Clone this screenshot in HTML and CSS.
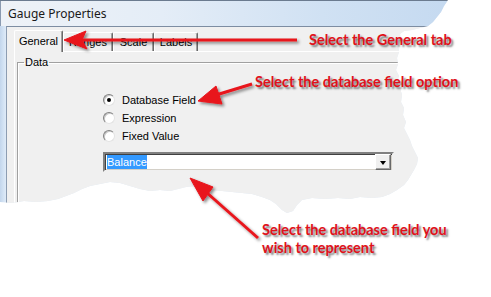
FILE: index.html
```html
<!DOCTYPE html>
<html>
<head>
<meta charset="utf-8">
<link rel="stylesheet" href="styles.css">
</head>
<body>
<div class="page">
  <div class="window">
    <div class="title">Gauge Properties</div>
    <div class="client">
      <div class="tabs">
        <div class="tab tab-general active">General</div>
        <div class="tab tab-ranges">Ranges</div>
        <div class="tab tab-scale">Scale</div>
        <div class="tab tab-labels">Labels</div>
      </div>
      <div class="panel">
        <fieldset class="group">
          <legend>Data</legend>
          <div class="options">
            <div class="option"><span class="radio checked"></span><span>Database Field</span></div>
            <div class="option"><span class="radio"></span><span>Expression</span></div>
            <div class="option"><span class="radio"></span><span>Fixed Value</span></div>
          </div>
          <div class="combo">
            <div class="combo-text"><span class="sel">Balance</span></div>
            <div class="combo-btn"><span class="tri"></span></div>
          </div>
        </fieldset>
      </div>
    </div>
  </div>

  <svg class="arrows" width="491" height="297" viewBox="0 0 491 297">
    <defs>
      <filter id="sh" x="-20%" y="-20%" width="140%" height="140%">
        <feDropShadow dx="2" dy="2" stdDeviation="1.6" flood-color="#000" flood-opacity="0.45"/>
      </filter>
    </defs>
    <g filter="url(#sh)" fill="#e8141c" stroke="#e8141c">
      <line x1="297" y1="40" x2="82" y2="40" stroke-width="3"/>
      <polygon points="64,40 86,31 82,40 87,49" stroke-width="1" stroke-linejoin="round"/>
      <line x1="252" y1="84" x2="216" y2="95" stroke-width="3"/>
      <polygon points="198,101 216,86 219,95 222,104" stroke-width="1" stroke-linejoin="round"/>
      <line x1="258" y1="238" x2="206" y2="192" stroke-width="3"/>
      <polygon points="190,178 213,187 208,194 203,201" stroke-width="1" stroke-linejoin="round"/>
    </g>
  </svg>

  <div class="note note-tab">Select the General tab</div>
  <div class="note note-option">Select the database field option</div>
  <div class="note note-field">Select the database field you<br>wish to represent</div>
</div>
</body>
</html>
```

FILE: styles.css
```css
html, body {
  margin: 0;
  padding: 0;
  background: #ffffff;
}

.page {
  position: relative;
  width: 491px;
  height: 297px;
  overflow: hidden;
  background: #ffffff;
}

.window {
  width: 460px;
  height: 216px;
  display: flex;
  flex-direction: column;
  background: linear-gradient(to right, #c3d6ec 0px, #d6e5f5 4px, #dfeaf7 6px);
  box-sizing: border-box;
  border-top: 1px solid #6b7b8f;
  clip-path: polygon(0 0, 448px 0, 444px 6px, 441px 12px, 437px 17px, 433px 22px, 428px 26px, 420px 28px, 412px 30px, 404px 31px, 400px 34px, 401px 40px, 398px 46px, 399px 52px, 397px 58px, 398px 64px, 396px 70px, 399px 76px, 397px 82px, 400px 88px, 402px 95px, 401px 102px, 404px 108px, 403px 115px, 406px 122px, 404px 128px, 407px 134px, 410px 140px, 412px 146px, 415px 152px, 418px 158px, 417px 164px, 414px 170px, 411px 175px, 408px 180px, 404px 185px, 397px 190px, 390px 194px, 382px 197px, 372px 198px, 360px 197px, 350px 199px, 338px 198px, 325px 199px, 312px 198px, 302px 200px, 297px 205px, 293px 211px, 287px 213px, 282px 210px, 276px 204px, 270px 200px, 262px 197px, 252px 194px, 242px 193px, 232px 192px, 222px 191px, 212px 190px, 203px 188px, 195px 186px, 186px 187px, 178px 189px, 170px 191px, 160px 190px, 150px 191px, 140px 189px, 130px 186px, 120px 183px, 110px 182px, 100px 184px, 90px 186px, 82px 189px, 74px 193px, 66px 196px, 58px 199px, 48px 201px, 36px 202px, 24px 201px, 12px 203px, 0 202px);
}

.title {
  height: 25px;
  flex: none;
  display: flex;
  align-items: center;
  padding-left: 7px;
  font-family: "Noto Sans", "Open Sans", sans-serif;
  font-size: 12px;
  color: #1a1a1a;
  background: linear-gradient(to right, #eef2f7 0%, #e4edf7 35%, #d0e1f3 70%, #c4d9f0 100%);
  border-left: 1px solid #8a9ab0;
}

.client {
  flex: 1;
  margin-left: 6px;
  background: #f0f0f0;
  border-top: 1px solid #7d8da2;
  border-left: 1px solid #8d9db2;
  padding: 3px 0 0 7px;
  display: flex;
  flex-direction: column;
  font-family: "Liberation Sans", Arial, sans-serif;
  font-size: 11px;
  color: #000;
}

.tabs {
  display: flex;
  align-items: flex-end;
  height: 21px;
  flex: none;
  position: relative;
  z-index: 1;
}

.tab {
  height: 19px;
  box-sizing: border-box;
  display: flex;
  align-items: center;
  justify-content: center;
  border-top: 1px solid #ffffff;
  border-left: 1px solid #ffffff;
  border-right: 1px solid #696969;
  box-shadow: inset -1px 0 0 #a0a0a0;
  border-radius: 2px 2px 0 0;
  background: #f0f0f0;
}

.tab.active {
  height: 22px;
  margin-bottom: -1px;
  padding-bottom: 2px;
}

.tab-general { width: 49px; }
.tab-ranges { width: 50px; }
.tab-scale { width: 41px; }
.tab-labels { width: 44px; }

.panel {
  flex: 1;
  border-top: 1px solid #ffffff;
  border-left: 1px solid #ffffff;
  padding: 4px 0 0 2px;
}

.group {
  margin: 0;
  height: 200px;
  border: 1px solid #a0a0a0;
  box-shadow: inset 1px 1px 0 #ffffff, 1px 1px 0 #ffffff;
  padding: 0 0 0 6px;
}

.group legend {
  padding: 0 1px;
  line-height: 13px;
}

.options {
  margin: 22px 0 0 79px;
  display: flex;
  flex-direction: column;
}

.option {
  height: 18px;
  display: flex;
  align-items: center;
  gap: 7px;
}

.radio {
  width: 10px;
  height: 10px;
  border-radius: 50%;
  border: 1px solid;
  border-color: #808080 #e3e3e3 #e3e3e3 #808080;
  background: #ffffff;
  display: flex;
  align-items: center;
  justify-content: center;
  box-shadow: inset 1px 1px 0 #c8c8c8;
}

.radio.checked::after {
  content: "";
  width: 4px;
  height: 4px;
  border-radius: 50%;
  background: #000;
}

.combo {
  margin: 7px 0 0 79px;
  width: 291px;
  height: 20px;
  box-sizing: border-box;
  border: 2px solid;
  border-color: #808080 #f0f0f0 #f0f0f0 #808080;
  box-shadow: inset 1px 1px 0 #404040, inset -1px -1px 0 #d4d0c8;
  background: #ffffff;
  display: flex;
  padding: 0 1px 0 1px;
  align-items: stretch;
}

.combo-text {
  flex: 1;
  display: flex;
  align-items: center;
  padding-left: 1px;
}

.sel {
  background: #3399ff;
  color: #ffffff;
  line-height: 14px;
}

.combo-btn {
  width: 16px;
  box-sizing: border-box;
  background: #f0f0f0;
  border: 1px solid;
  border-color: #ffffff #696969 #696969 #ffffff;
  box-shadow: inset -1px -1px 0 #a0a0a0;
  display: flex;
  align-items: center;
  justify-content: center;
}

.tri {
  width: 0;
  height: 0;
  border-left: 3.5px solid transparent;
  border-right: 3.5px solid transparent;
  border-top: 4px solid #000;
  margin-top: 1px;
}

.arrows {
  position: absolute;
  left: 0;
  top: 0;
  pointer-events: none;
}

.note {
  position: absolute;
  font-family: Lato, "Open Sans", sans-serif;
  font-weight: 700;
  font-size: 14.5px;
  line-height: 18px;
  letter-spacing: 0;
  color: #e0111a;
  text-shadow: 2px 2px 2px rgba(0, 0, 0, 0.5);
  white-space: nowrap;
}

.note-tab { left: 309px; top: 31px; }
.note-option { left: 255px; top: 73px; }
.note-field { left: 262px; top: 221px; }
```
